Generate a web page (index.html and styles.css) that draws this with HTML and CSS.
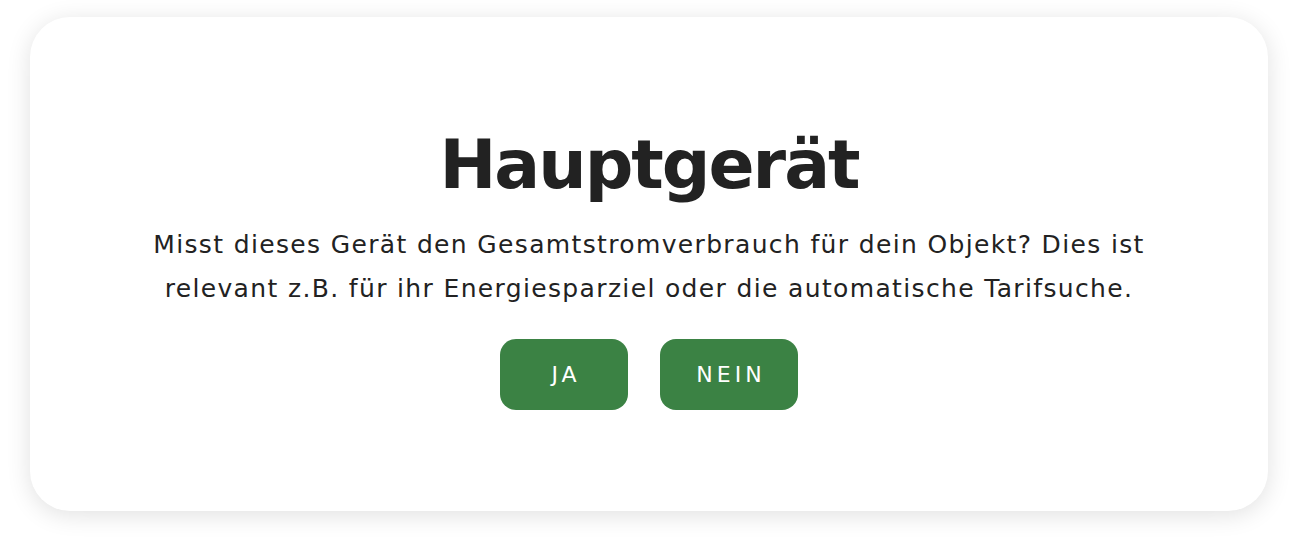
FILE: index.html
```html
<!DOCTYPE html>
<html lang="de">
<head>
<meta charset="utf-8">
<link rel="stylesheet" href="styles.css">
</head>
<body>
<div class="page">
  <section class="card">
    <h1 class="title">Hauptgerät</h1>
    <p class="text">Misst dieses Gerät den Gesamtstromverbrauch für dein Objekt? Dies ist<br>relevant z.B. für ihr Energiesparziel oder die automatische Tarifsuche.</p>
    <div class="actions">
      <button class="btn btn-ja">JA</button>
      <button class="btn btn-nein">NEIN</button>
    </div>
  </section>
</div>
</body>
</html>
```

FILE: styles.css
```css
html, body {
  margin: 0;
  padding: 0;
  background: #ffffff;
}
body {
  font-family: "DejaVu Sans", "Noto Sans", sans-serif;
  color: #222222;
}
.page {
  padding: 17px 30px 26px 30px;
}
.card {
  height: 494px;
  box-sizing: border-box;
  background: #ffffff;
  border-radius: 40px;
  box-shadow: 0 4px 24px rgba(0, 0, 0, 0.12);
  display: flex;
  flex-direction: column;
  align-items: center;
  justify-content: center;
  text-align: center;
  padding-top: 6px;
}
.title {
  margin: 0;
  font-size: 68px;
  font-weight: 700;
  line-height: 80px;
  letter-spacing: -2px;
  color: #222222;
}
.text {
  margin: 18px 0 0 0;
  font-size: 25px;
  line-height: 44px;
  font-weight: 400;
  letter-spacing: 1.35px;
  color: #222222;
}
.actions {
  display: flex;
  gap: 32px;
  margin-top: 28px;
}
.btn {
  height: 71px;
  border: none;
  border-radius: 16px;
  background: #3b8244;
  color: #ffffff;
  font-family: inherit;
  font-size: 22px;
  font-weight: 400;
  letter-spacing: 4px;
  padding: 0 0 0 4px;
}
.btn-ja { width: 128px; }
.btn-nein { width: 138px; }
```
